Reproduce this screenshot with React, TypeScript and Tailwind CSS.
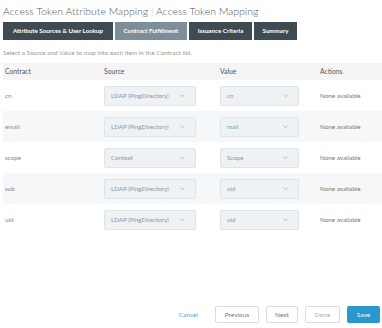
import React from 'react';

const rows = [
  { contract: 'cn', source: 'LDAP (PingDirectory)', value: 'cn' },
  { contract: 'email', source: 'LDAP (PingDirectory)', value: 'mail' },
  { contract: 'scope', source: 'Context', value: 'Scope' },
  { contract: 'sub', source: 'LDAP (PingDirectory)', value: 'uid' },
  { contract: 'uid', source: 'LDAP (PingDirectory)', value: 'uid' },
];

const tabs = [
  { label: 'Attribute Sources & User Lookup', w: 'w-[110px]', active: false },
  { label: 'Contract Fulfillment', w: 'w-[72px]', active: true },
  { label: 'Issuance Criteria', w: 'w-[63px]', active: false },
  { label: 'Summary', w: 'w-[43px]', active: false },
];

const Chevron = () => (
  <svg width="5" height="3.5" viewBox="0 0 6 4" fill="none" className="shrink-0">
    <path d="M0.6 0.8 L3 3.1 L5.4 0.8" stroke="#8a9aa6" strokeWidth="0.8" />
  </svg>
);

const Select: React.FC<{ text: string; width: string }> = ({ text, width }) => (
  <div
    className={`${width} h-[20px] flex items-center justify-between pl-[6px] pr-[10px] bg-[#eef2f5] border border-[#dde4ea] rounded-[2px] text-[6.2px] text-[#8a969f]`}
  >
    <span>{text}</span>
    <Chevron />
  </div>
);

export default function App() {
  return (
    <div
      className="w-[382px] h-[328px] bg-white flex flex-col overflow-hidden"
      style={{ fontFamily: 'Lato, "Open Sans", Arial, sans-serif' }}
    >
      <h1 className="pl-[3px] pt-[4px] h-[21px] text-[10.4px] leading-[14px] font-light text-[#555] tracking-[0.05px]">
        Access Token Attribute Mapping <span className="text-[#bbb]">|</span> Access Token Mapping
      </h1>

      <div className="flex gap-[2px] pl-[3px] mt-[1px]">
        {tabs.map((t) => (
          <div
            key={t.label}
            className={`${t.w} h-[18px] flex items-center justify-center text-[6.2px] font-bold text-white ${
              t.active ? 'bg-[#7d8e9b]' : 'bg-[#3e4b53]'
            }`}
          >
            {t.label}
          </div>
        ))}
      </div>

      <p className="pl-[3px] mt-[9px] text-[6.4px] leading-[8px] text-[#999]">
        Select a Source and Value to map into each item in the Contract list.
      </p>

      <div className="mt-[6px] pl-[3px]">
        <div className="flex items-center h-[17px] bg-[#f5f5f5] text-[6.8px] text-[#555]">
          <div className="w-[101px] pl-[2px]">Contract</div>
          <div className="w-[116px]">Source</div>
          <div className="w-[100px]">Value</div>
          <div>Actions</div>
        </div>
        {rows.map((r, i) => (
          <div
            key={r.contract}
            className={`flex items-center h-[31px] text-[6.3px] text-[#8a8a8a] ${
              i % 2 === 1 ? 'bg-[#f6f7f8]' : 'bg-white'
            }`}
          >
            <div className="w-[101px] pl-[2px]">{r.contract}</div>
            <div className="w-[116px]">
              <Select text={r.source} width="w-[92px]" />
            </div>
            <div className="w-[100px]">
              <Select text={r.value} width="w-[79px]" />
            </div>
            <div className="text-[#777]">None available</div>
          </div>
        ))}
      </div>

      <div className="flex-1" />

      <div className="flex items-center justify-end pr-[2px] pb-[5px] text-[6.5px]">
        <span className="text-[#4aa3d8] mr-[17px]">Cancel</span>
        <div className="w-[44px] h-[17px] flex items-center justify-center border border-[#dcdcdc] rounded-[2px] text-[#777] mr-[7px]">
          Previous
        </div>
        <div className="w-[32px] h-[17px] flex items-center justify-center border border-[#dcdcdc] rounded-[2px] text-[#777] mr-[7px]">
          Next
        </div>
        <div className="w-[35px] h-[17px] flex items-center justify-center border border-[#dcdcdc] rounded-[2px] text-[#aaa] mr-[7px]">
          Done
        </div>
        <div className="w-[33px] h-[17px] flex items-center justify-center rounded-[2px] bg-[#2b97cf] text-white">
          Save
        </div>
      </div>
    </div>
  );
}
